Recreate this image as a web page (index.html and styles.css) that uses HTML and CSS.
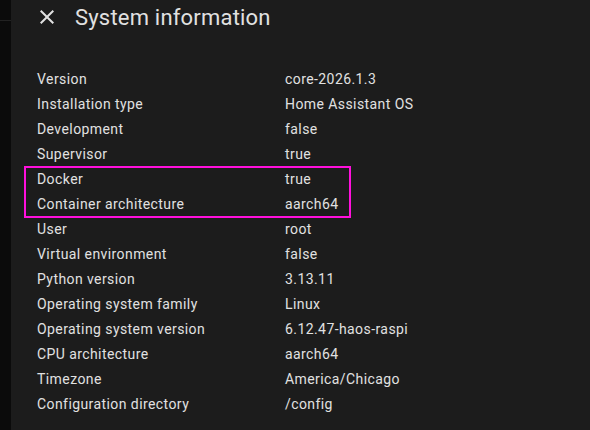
FILE: index.html
```html
<!DOCTYPE html>
<html>
<head>
<meta charset="utf-8">
<link rel="stylesheet" href="styles.css">
</head>
<body>
<div class="app">
  <div class="side"><div class="side-head"></div></div>
  <div class="dialog">
    <div class="header">
      <svg class="close" viewBox="0 0 24 24" width="24" height="24"><path d="M19,6.41L17.59,5L12,10.59L6.41,5L5,6.41L10.59,12L5,17.59L6.41,19L12,13.41L17.59,19L19,17.59L13.41,12L19,6.41Z" fill="#e1e1e1"/></svg>
      <div class="title">System information</div>
    </div>
    <div class="list">
      <div class="row"><span>Version</span><span>core-2026.1.3</span></div>
      <div class="row"><span>Installation type</span><span>Home Assistant OS</span></div>
      <div class="row"><span>Development</span><span>false</span></div>
      <div class="row"><span>Supervisor</span><span>true</span></div>
      <div class="group">
        <div class="row"><span>Docker</span><span>true</span></div>
        <div class="row"><span>Container architecture</span><span>aarch64</span></div>
      </div>
      <div class="row"><span>User</span><span>root</span></div>
      <div class="row"><span>Virtual environment</span><span>false</span></div>
      <div class="row"><span>Python version</span><span>3.13.11</span></div>
      <div class="row"><span>Operating system family</span><span>Linux</span></div>
      <div class="row"><span>Operating system version</span><span>6.12.47-haos-raspi</span></div>
      <div class="row"><span>CPU architecture</span><span>aarch64</span></div>
      <div class="row"><span>Timezone</span><span>America/Chicago</span></div>
      <div class="row"><span>Configuration directory</span><span>/config</span></div>
    </div>
  </div>
</div>
</body>
</html>
```
FILE: styles.css
```css
html, body {
  margin: 0;
  padding: 0;
  height: 100%;
  background: #0b0b0b;
  font-family: Roboto, "Liberation Sans", sans-serif;
  color: #e1e1e1;
}
.app {
  display: flex;
  height: 430px;
  overflow: hidden;
}
.side {
  width: 11px;
  flex: none;
  background: #0b0b0b;
}
.side-head {
  height: 20px;
  border-bottom: 1px solid #222;
}
.dialog {
  flex: 1;
  background: #1c1c1c;
}
.header {
  display: flex;
  align-items: center;
  height: 34px;
  padding-left: 24px;
}
.close {
  flex: none;
  display: block;
}
.title {
  margin-left: 16px;
  font-size: 22px;
  letter-spacing: 0.2px;
  color: #e1e1e1;
}
.list {
  padding-top: 33px;
  padding-left: 26px;
}
.row {
  display: grid;
  grid-template-columns: 248px auto;
  height: 25px;
  line-height: 25px;
  font-size: 14px;
  letter-spacing: 0.42px;
}
.group {
  margin-left: -12px;
  padding-left: 12px;
  width: 313px;
  outline: 2px solid #ff10dc;
  outline-offset: -1px;
}
```
